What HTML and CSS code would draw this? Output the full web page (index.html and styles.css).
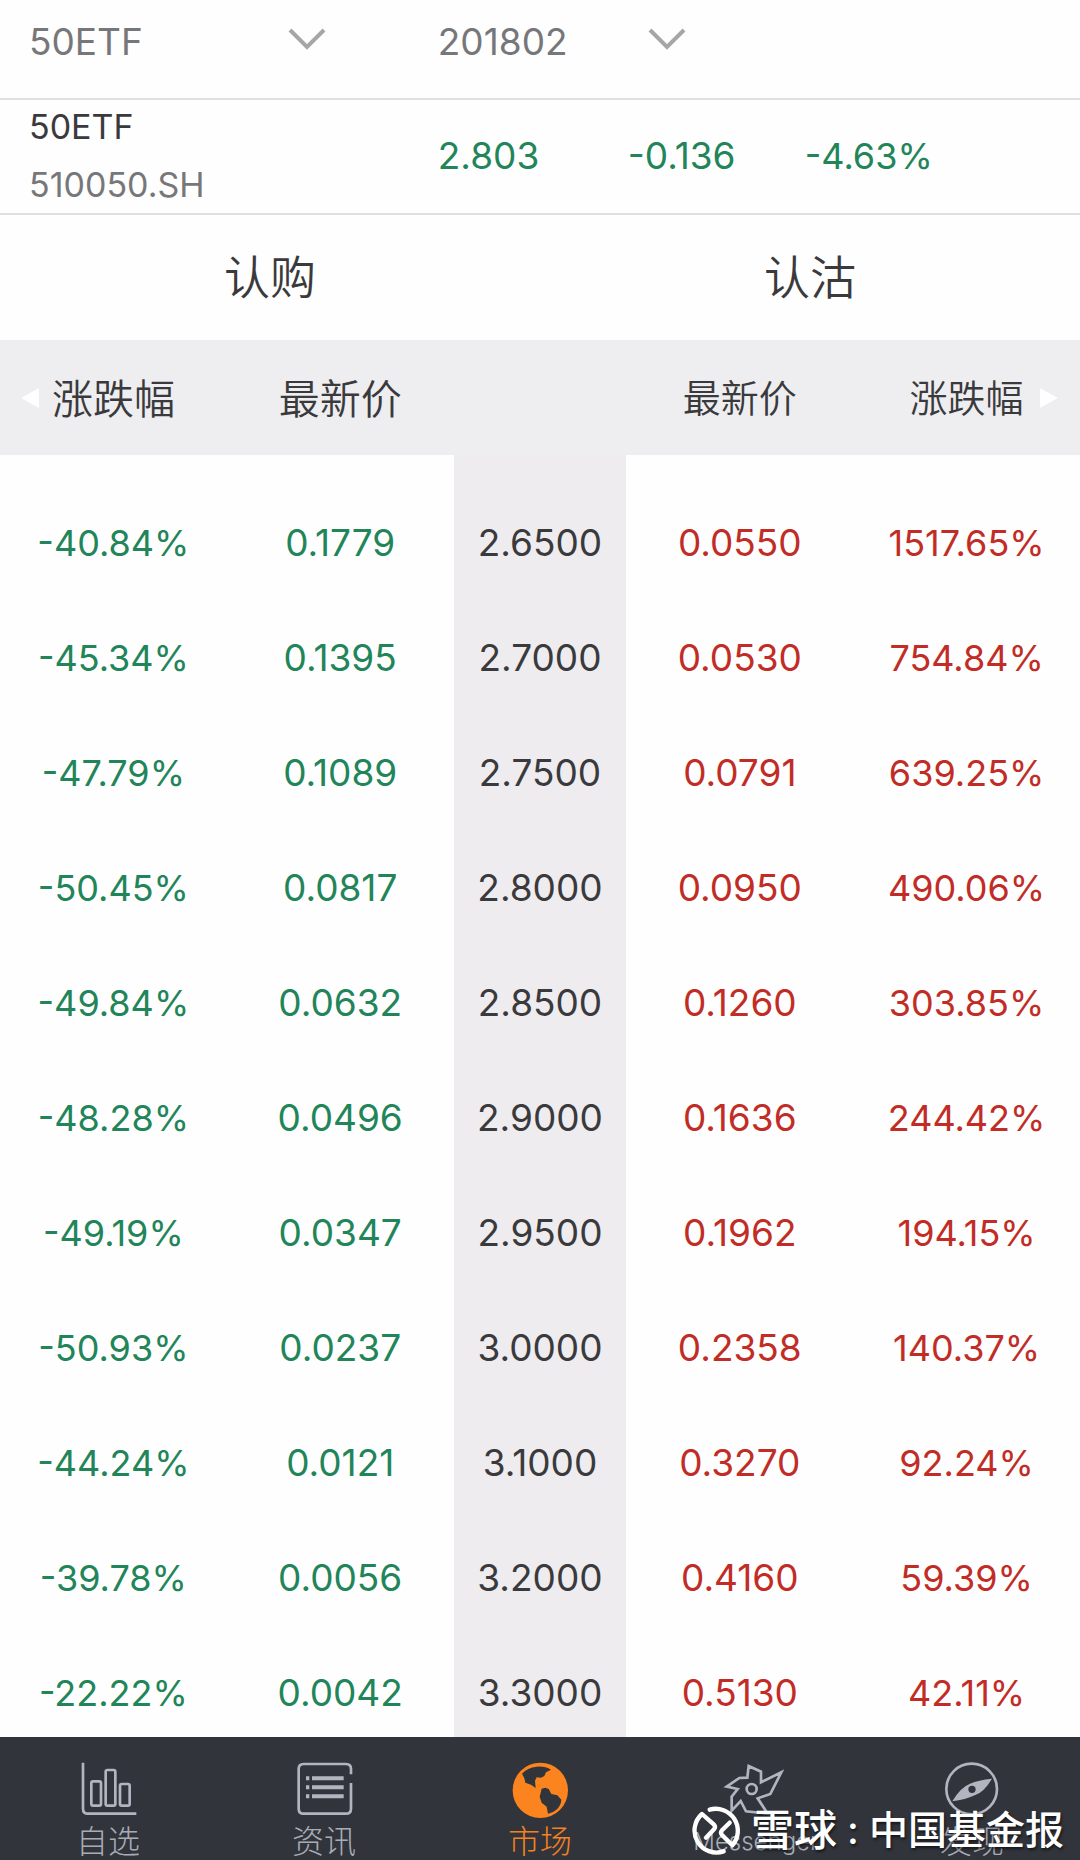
FILE: index.html
```html
<!DOCTYPE html>
<html lang="zh-CN">
<head>
    <meta charset="UTF-8">
    <meta name="viewport" content="width=device-width, initial-scale=1.0">
    <title>50ETF 期权</title>
    <link rel="stylesheet" href="styles.css">
</head>
<body>
    <div class="app">
        <!-- Underlying and expiry filters -->
        <form class="filters">
            <div class="filter">
                <select id="underlying" aria-label="标的">
                    <option>50ETF</option>
                </select>
                <svg class="chevron" viewBox="0 0 36 20"><path d="M1 1 L18 18 L35 1"/></svg>
            </div>
            <div class="filter">
                <select id="expiry" aria-label="到期月份">
                    <option>201802</option>
                </select>
                <svg class="chevron" viewBox="0 0 36 20"><path d="M1 1 L18 18 L35 1"/></svg>
            </div>
        </form>

        <!-- Quote of the underlying -->
        <section class="quote">
            <div class="quote-name">
                <strong>50ETF</strong>
                <span>510050.SH</span>
            </div>
            <span class="quote-price">2.803</span>
            <span class="quote-change">-0.136</span>
            <span class="quote-percent">-4.63%</span>
        </section>

        <div class="sides">
            <h2>认购</h2>
            <h2>认沽</h2>
        </div>

        <main class="board">
            <table class="options">
                <thead>
                    <tr>
                        <th class="call-head"><svg class="arrow arrow-left" viewBox="0 0 18 20"><path d="M0 10 L18 0 V20 Z"/></svg>涨跌幅</th>
                        <th class="call-head">最新价</th>
                        <th class="strike-head"></th>
                        <th>最新价</th>
                        <th>涨跌幅<svg class="arrow arrow-right" viewBox="0 0 18 20"><path d="M18 10 L0 0 V20 Z"/></svg></th>
                    </tr>
                </thead>
                <tbody>
                    <tr><td>-40.84%</td><td>0.1779</td><td>2.6500</td><td>0.0550</td><td>1517.65%</td></tr>
                    <tr><td>-45.34%</td><td>0.1395</td><td>2.7000</td><td>0.0530</td><td>754.84%</td></tr>
                    <tr><td>-47.79%</td><td>0.1089</td><td>2.7500</td><td>0.0791</td><td>639.25%</td></tr>
                    <tr><td>-50.45%</td><td>0.0817</td><td>2.8000</td><td>0.0950</td><td>490.06%</td></tr>
                    <tr><td>-49.84%</td><td>0.0632</td><td>2.8500</td><td>0.1260</td><td>303.85%</td></tr>
                    <tr><td>-48.28%</td><td>0.0496</td><td>2.9000</td><td>0.1636</td><td>244.42%</td></tr>
                    <tr><td>-49.19%</td><td>0.0347</td><td>2.9500</td><td>0.1962</td><td>194.15%</td></tr>
                    <tr><td>-50.93%</td><td>0.0237</td><td>3.0000</td><td>0.2358</td><td>140.37%</td></tr>
                    <tr><td>-44.24%</td><td>0.0121</td><td>3.1000</td><td>0.3270</td><td>92.24%</td></tr>
                    <tr><td>-39.78%</td><td>0.0056</td><td>3.2000</td><td>0.4160</td><td>59.39%</td></tr>
                    <tr><td>-22.22%</td><td>0.0042</td><td>3.3000</td><td>0.5130</td><td>42.11%</td></tr>
                </tbody>
            </table>
        </main>

        <nav class="tabbar">
            <a href="#watchlist">
                <svg class="icon" viewBox="240 123 168 168">
                    <path d="M249 128 V266 Q249 281 264 281 H409"/>
                    <rect x="274" y="184" width="29" height="73" rx="5"/>
                    <rect x="317" y="150" width="29" height="107" rx="5"/>
                    <rect x="360" y="192" width="29" height="65" rx="5"/>
                </svg>
                自选
            </a>
            <a href="#news">
                <svg class="icon" viewBox="888 123 168 168">
                    <path d="M1053 163 V147 Q1053 132 1038 132 H911 Q896 132 896 147 V266 Q896 281 911 281 H1038 Q1053 281 1053 266 V189"/>
                    <path class="news-lines" d="M918 175 H928 M936 175 H1031 M918 202 H928 M936 202 H1031 M918 229 H928 M936 229 H1031"/>
                </svg>
                资讯
            </a>
            <a href="#market" class="active">
                <svg class="icon" viewBox="456 123 168 168">
                    <circle class="globe" cx="541" cy="211" r="83"/>
                    <path class="land" d="M486 161 Q502 143 530 140 Q555 138 573 149 L558 157 L553 168 L543 173 L530 172 L525 182 L527 204 L513 194 L496 188 L493 175 Z"/>
                    <path class="land" d="M545 206 L556 203 L566 207 L574 222 L592 226 L604 239 Q603 257 589 269 Q578 279 564 281 L560 260 L545 248 L539 230 Z"/>
                </svg>
                市场
            </a>
            <a href="#messenger">
                <svg class="icon" viewBox="144 123 168 168">
                    <path d="M206 138 L243 155 V187 L304 157 L271 222 L233 235 L263 281 L198 274 L182 243 L155 272 V230 L173 207 L140 200 L178 174 L202 173 Z"/>
                    <circle cx="215" cy="207" r="15"/>
                </svg>
                <span class="latin">Messenger</span>
            </a>
            <a href="#discover">
                <svg class="icon" viewBox="792 123 168 168">
                    <circle cx="875" cy="207" r="76"/>
                    <path class="needle" fill-rule="evenodd" d="M817 244 Q840 203 870 191 Q895 180 936 176 Q912 216 886 225 Q856 239 817 244 Z M887 208 A11 11 0 1 0 865 208 A11 11 0 1 0 887 208 Z"/>
                </svg>
                发现
            </a>
        </nav>

        <!-- Source mark laid over the tab bar -->
        <div class="watermark">
            <svg class="watermark-logo" viewBox="0 0 150 150">
                <path d="M53 14 A66 66 0 0 1 121 121 L90 90 Q84 83 90 76 L113 53"/>
                <path d="M95 139 A66 66 0 0 1 30 27 L66 59 Q72 66 66 73 L42 98"/>
            </svg>
            <span class="watermark-brand">雪球</span>
            <span class="watermark-colon">:</span>
            <span>中国基金报</span>
        </div>
    </div>
</body>
</html>
```
FILE: styles.css
```css
* {
    box-sizing: border-box;
}

body {
    margin: 0;
    background-color: #fefefe;
    color: #3a3a3d;
    font-family: Inter, "Noto Sans CJK SC", sans-serif;
    font-size: 37px;
}

.app {
    position: relative;
    display: flex;
    flex-direction: column;
    height: 100vh;
    overflow: hidden;
}

/* Filters */
.filters {
    display: flex;
    flex: none;
    height: 100px;
    padding: 16px 29px 0;
    border-bottom: 2px solid #dfdfe2;
}

.filter {
    position: relative;
    flex: 0 0 40%;
    height: 50px;
}

.filter select {
    width: 300px;
    height: 50px;
    padding: 0;
    border: none;
    background: none;
    appearance: none;
    color: #77777a;
    font: inherit;
}

.chevron {
    position: absolute;
    top: 13px;
    left: 260px;
    width: 36px;
    height: 20px;
    fill: none;
    stroke: #a6a6a8;
    stroke-width: 4;
    overflow: visible;
    pointer-events: none;
}

.filter + .filter .chevron {
    left: 211px;
}

/* Quote */
.quote {
    display: flex;
    flex: none;
    align-items: center;
    height: 115px;
    padding: 0 29px 2px;
    border-bottom: 2px solid #dfdfe2;
    color: #22855a;
}

.quote-name {
    display: flex;
    flex-direction: column;
    flex: 0 0 40%;
    color: #77777a;
    font-size: 34px;
    line-height: 58px;
}

.quote-name strong {
    color: #3a3a3d;
    font-weight: 400;
}

.quote-price {
    width: 190px;
}

.quote-change {
    width: 177px;
}

.quote-percent {
    font-size: 36px;
}

/* Call / put titles */
.sides {
    display: flex;
    flex: none;
    height: 125px;
}

.sides h2 {
    flex: 1;
    margin: 0;
    font-size: 46px;
    font-weight: 350;
    line-height: 125px;
    text-align: center;
}

/* Option board */
.board {
    flex: 1;
    min-height: 0;
    overflow: hidden;
}

.options {
    width: 100%;
    table-layout: fixed;
    border-collapse: collapse;
    text-align: center;
}

.options th {
    position: relative;
    width: 21%;
    height: 115px;
    padding: 0 0 4px;
    background-color: #eeedef;
    font-size: 38px;
    font-weight: 350;
}

.options .call-head {
    font-size: 41px;
}

.options .strike-head {
    width: 16%;
}

.options td {
    height: 115px;
    padding: 0;
    color: #c12d26;
}

.options td:first-child,
.options td:last-child {
    font-size: 36px;
}

.options tbody tr:first-child td {
    height: 145px;
    padding-top: 30px;
}

.options td:nth-child(-n+2) {
    color: #22855a;
}

.options td:nth-child(3) {
    background-color: #eeecef;
    color: #3a3a3d;
}

.arrow {
    position: absolute;
    top: 48px;
    width: 18px;
    height: 20px;
    fill: #fefefe;
}

.arrow-left {
    left: 21px;
}

.arrow-right {
    right: 22px;
}

/* Tab bar */
.tabbar {
    display: flex;
    flex: none;
    height: 123px;
    padding-top: 24px;
    background-color: #31343b;
}

.tabbar a {
    display: flex;
    flex: 1;
    flex-direction: column;
    align-items: center;
    gap: 6px;
    color: #a9acb7;
    font-size: 32px;
    font-weight: 300;
    line-height: 38px;
    text-decoration: none;
}

.tabbar .latin {
    font-size: 24px;
}

.tabbar .active {
    color: #f5821f;
}

.icon {
    width: 56px;
    height: 56px;
    fill: none;
    stroke: #b2b5c0;
    stroke-width: 8;
    overflow: visible;
}

.icon .news-lines {
    stroke-width: 12;
}

.icon .globe {
    fill: #fb841e;
    stroke: none;
}

.icon .land {
    fill: #31343b;
    stroke: none;
}

.icon .needle {
    fill: #b2b5c0;
    stroke: none;
}

/* Watermark */
.watermark {
    position: absolute;
    right: 16px;
    bottom: 3px;
    display: flex;
    align-items: center;
    color: #fff;
    font-size: 39px;
    font-weight: 500;
    line-height: 54px;
    text-shadow: 1px 2px 3px rgba(0, 0, 0, 0.6);
}

.watermark-logo {
    width: 50px;
    height: 50px;
    margin-right: 9px;
    fill: none;
    stroke: #fff;
    stroke-width: 13;
    stroke-linecap: round;
    stroke-linejoin: round;
}

.watermark-brand {
    font-size: 43px;
}

.watermark-colon {
    width: 32px;
    text-align: center;
}
```
